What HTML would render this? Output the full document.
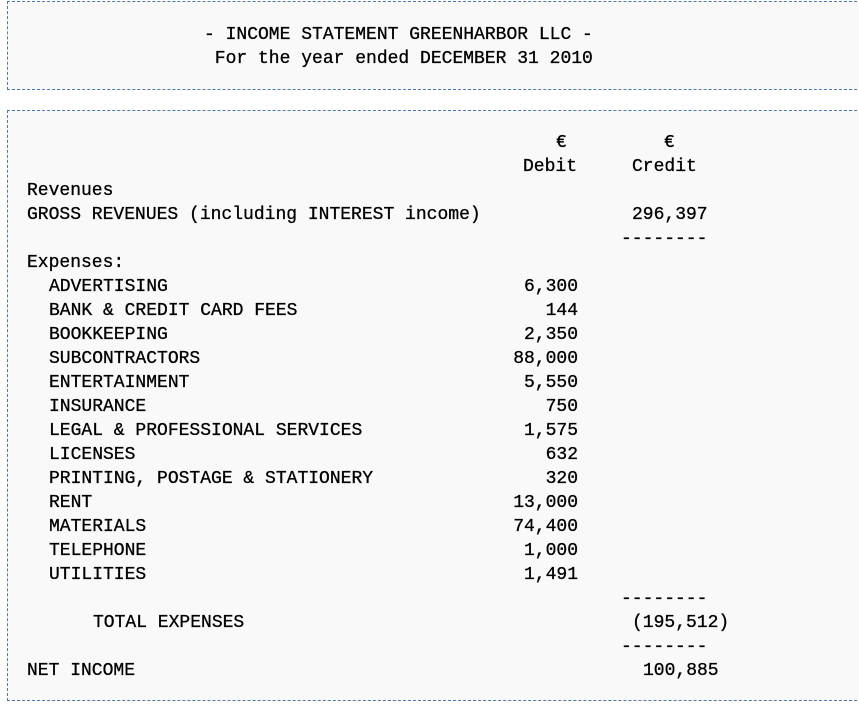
<!DOCTYPE html>
<html><head><meta charset="utf-8"><style>
html,body{margin:0;padding:0;background:#fff;width:859px;height:707px;overflow:hidden}
body{font-family:"Liberation Mono",monospace;font-size:18px;color:#000;position:relative}
.box{position:absolute;left:7px;width:860px;border:1px dashed #4f79a6;background:#f9f9f9;box-sizing:border-box}
.t{position:absolute;line-height:24px;white-space:pre;margin-top:2px;-webkit-text-stroke:0.3px #000}
.d{position:absolute;line-height:24px;white-space:pre;right:281px;text-align:right;margin-top:2px;-webkit-text-stroke:0.3px #000}
</style></head><body>
<div class="box" style="top:1px;height:89px"></div>
<div class="box" style="top:110px;height:591px"></div>
<div class="t" style="left:204px;top:21px">- INCOME STATEMENT GREENHARBOR LLC -</div>
<div class="t" style="left:204px;top:45px"> For the year ended DECEMBER 31 2010</div>

<div class="t" style="left:556px;top:129px">€</div>
<div class="t" style="left:664px;top:129px">€</div>
<div class="t" style="left:523px;top:153px">Debit</div>
<div class="t" style="left:632px;top:153px">Credit</div>
<div class="t" style="left:27px;top:177px">Revenues</div>
<div class="t" style="left:27px;top:201px">GROSS REVENUES (including INTEREST income)</div>
<div class="t" style="left:632px;top:201px">296,397</div>
<div class="t" style="left:621px;top:225px">--------</div>
<div class="t" style="left:27px;top:249px">Expenses:</div>

<div class="t" style="left:49px;top:273px">ADVERTISING</div><div class="d" style="top:273px">6,300</div>
<div class="t" style="left:49px;top:297px">BANK &amp; CREDIT CARD FEES</div><div class="d" style="top:297px">144</div>
<div class="t" style="left:49px;top:321px">BOOKKEEPING</div><div class="d" style="top:321px">2,350</div>
<div class="t" style="left:49px;top:345px">SUBCONTRACTORS</div><div class="d" style="top:345px">88,000</div>
<div class="t" style="left:49px;top:369px">ENTERTAINMENT</div><div class="d" style="top:369px">5,550</div>
<div class="t" style="left:49px;top:393px">INSURANCE</div><div class="d" style="top:393px">750</div>
<div class="t" style="left:49px;top:417px">LEGAL &amp; PROFESSIONAL SERVICES</div><div class="d" style="top:417px">1,575</div>
<div class="t" style="left:49px;top:441px">LICENSES</div><div class="d" style="top:441px">632</div>
<div class="t" style="left:49px;top:465px">PRINTING, POSTAGE &amp; STATIONERY</div><div class="d" style="top:465px">320</div>
<div class="t" style="left:49px;top:489px">RENT</div><div class="d" style="top:489px">13,000</div>
<div class="t" style="left:49px;top:513px">MATERIALS</div><div class="d" style="top:513px">74,400</div>
<div class="t" style="left:49px;top:537px">TELEPHONE</div><div class="d" style="top:537px">1,000</div>
<div class="t" style="left:49px;top:561px">UTILITIES</div><div class="d" style="top:561px">1,491</div>

<div class="t" style="left:621px;top:585px">--------</div>
<div class="t" style="left:93px;top:609px">TOTAL EXPENSES</div>
<div class="t" style="left:632px;top:609px">(195,512)</div>
<div class="t" style="left:621px;top:633px">--------</div>
<div class="t" style="left:27px;top:657px">NET INCOME</div>
<div class="t" style="left:643px;top:657px">100,885</div>
</body></html>
